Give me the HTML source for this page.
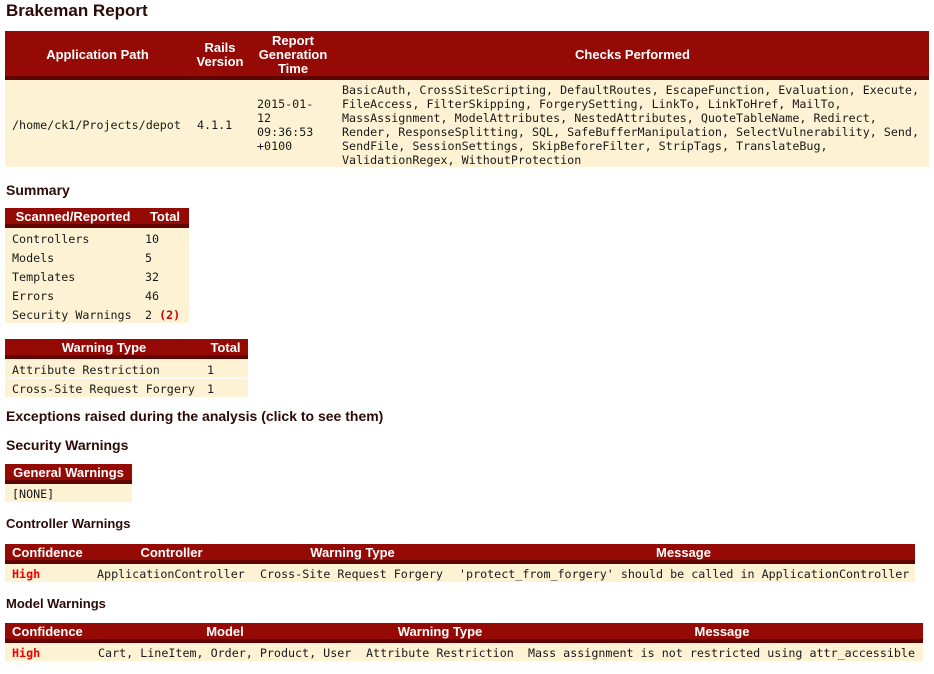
<!DOCTYPE html>
<html><head><meta charset="utf-8"><style>
body{margin:0;width:934px;height:674px;background:#fff;position:relative;font-family:"Liberation Sans",Arial,sans-serif;color:#2b0a08;overflow:hidden}
h{position:absolute;font-weight:bold;white-space:nowrap}
table{position:absolute;border-collapse:separate;border-spacing:0;table-layout:fixed}
th{background:#960a06;color:#fff;font:bold 13px "Liberation Sans",Arial,sans-serif;border-bottom:4px solid #5e0503;padding:2px 2px 0;text-align:center;line-height:14px}
td{background:#fdf2d3;font:11.7px "DejaVu Sans Mono",monospace;color:#1a1a1a;padding:2px 0 0 7px;white-space:nowrap;line-height:14px}
.sep td{border-top:1px solid #fff}
.hi{color:#e00;font-weight:bold}
</style></head><body>
<h style="left:6px;top:1px;font-size:17px;line-height:20px">Brakeman Report</h>

<table style="left:5px;top:31px;width:924px">
<colgroup><col style="width:185px"><col style="width:60px"><col style="width:86px"><col></colgroup>
<tr style="height:49px"><th>Application Path</th><th>Rails<br>Version</th><th>Report<br>Generation<br>Time</th><th>Checks Performed</th></tr>
<tr style="height:87px"><td>/home/ck1/Projects/depot</td><td>4.1.1</td><td>2015-01-<br>12<br>09:36:53<br>+0100</td><td style="padding-left:6px">BasicAuth, CrossSiteScripting, DefaultRoutes, EscapeFunction, Evaluation, Execute,<br>FileAccess, FilterSkipping, ForgerySetting, LinkTo, LinkToHref, MailTo,<br>MassAssignment, ModelAttributes, NestedAttributes, QuoteTableName, Redirect,<br>Render, ResponseSplitting, SQL, SafeBufferManipulation, SelectVulnerability, Send,<br>SendFile, SessionSettings, SkipBeforeFilter, StripTags, TranslateBug,<br>ValidationRegex, WithoutProtection</td></tr>
</table>

<h style="left:6px;top:182px;font-size:14px;line-height:16px">Summary</h>
<table style="left:5px;top:208px;width:184px">
<colgroup><col style="width:136px"><col></colgroup>
<tr style="height:20px"><th>Scanned/Reported</th><th>Total</th></tr>
<tr style="height:19px"><td>Controllers</td><td style="padding-left:4px">10</td></tr>
<tr style="height:19px"><td>Models</td><td style="padding-left:4px">5</td></tr>
<tr style="height:19px"><td>Templates</td><td style="padding-left:4px">32</td></tr>
<tr style="height:19px"><td>Errors</td><td style="padding-left:4px">46</td></tr>
<tr style="height:19px"><td>Security Warnings</td><td style="padding-left:4px">2 <span class="hi" style="color:#c00">(2)</span></td></tr>
</table>

<table style="left:5px;top:339px;width:243px">
<colgroup><col style="width:198px"><col></colgroup>
<tr style="height:19px"><th>Warning Type</th><th>Total</th></tr>
<tr style="height:19px"><td>Attribute Restriction</td><td style="padding-left:4px">1</td></tr>
<tr class="sep" style="height:19px"><td>Cross-Site Request Forgery</td><td style="padding-left:4px">1</td></tr>
</table>

<h style="left:6px;top:408px;font-size:14px;line-height:16px">Exceptions raised during the analysis (click to see them)</h>
<h style="left:6px;top:437px;font-size:14px;line-height:16px">Security Warnings</h>

<table style="left:5px;top:464px;width:127px">
<tr style="height:19px"><th>General Warnings</th></tr>
<tr style="height:18px"><td>[NONE]</td></tr>
</table>

<h style="left:6px;top:516px;font-size:13px;line-height:15px">Controller Warnings</h>
<table style="left:5px;top:544px;width:910px">
<colgroup><col style="width:85px"><col style="width:163px"><col style="width:199px"><col></colgroup>
<tr style="height:19px"><th style="text-align:left;padding-left:7px">Confidence</th><th>Controller</th><th>Warning Type</th><th>Message</th></tr>
<tr style="height:18px"><td class="hi">High</td><td>ApplicationController</td><td>Cross-Site Request Forgery</td><td>'protect_from_forgery' should be called in ApplicationController</td></tr>
</table>

<h style="left:6px;top:596px;font-size:13px;line-height:15px">Model Warnings</h>
<table style="left:5px;top:623px;width:918px">
<colgroup><col style="width:86px"><col style="width:268px"><col style="width:162px"><col></colgroup>
<tr style="height:19px"><th style="text-align:left;padding-left:7px">Confidence</th><th>Model</th><th>Warning Type</th><th>Message</th></tr>
<tr style="height:18px"><td class="hi">High</td><td>Cart, LineItem, Order, Product, User</td><td>Attribute Restriction</td><td>Mass assignment is not restricted using attr_accessible</td></tr>
</table>
</body></html>
